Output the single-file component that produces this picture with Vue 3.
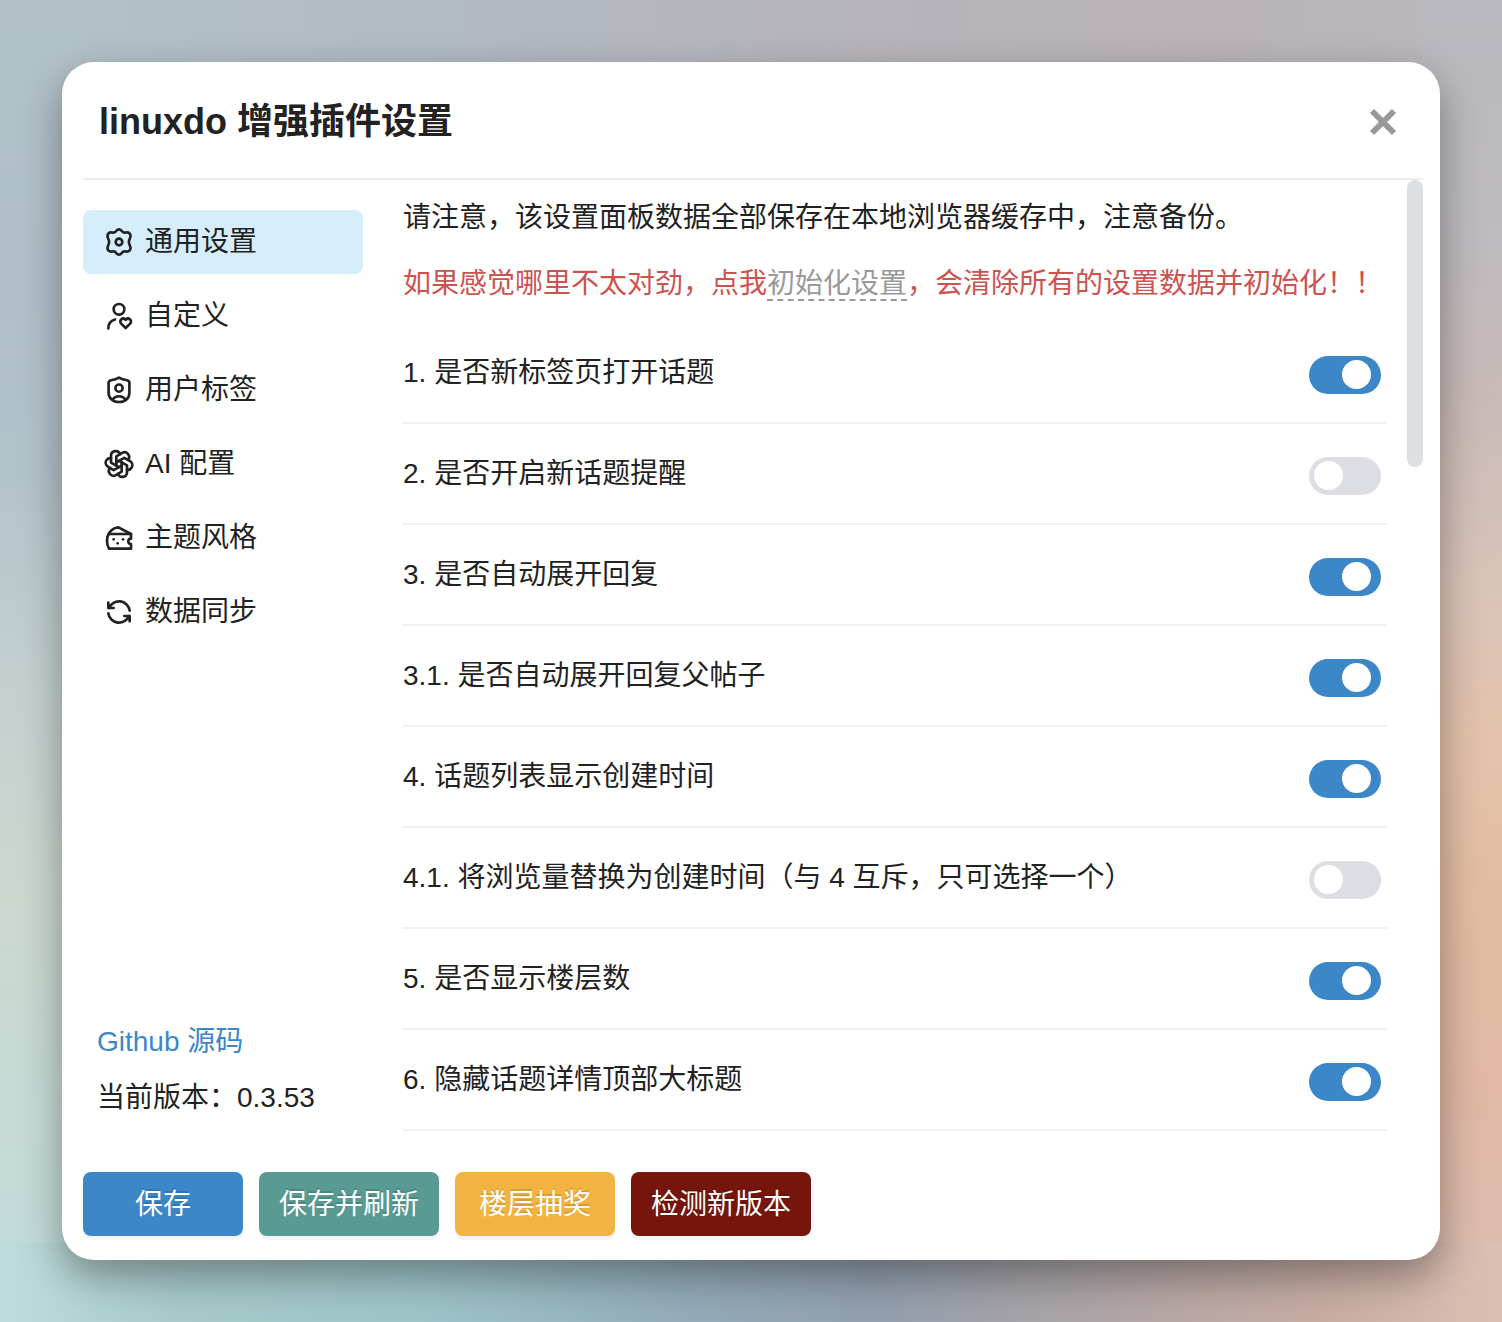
<script setup>
import { ref, reactive } from 'vue'

const tabs = [
  {
    label: '通用设置',
    paths: [
      'M10.1 3.6C11.2 2.1 12.8 2.1 13.9 3.6C14.7 4.8 15.8 5.2 17.1 4.9C19.6 4.5 21 6 20.5 8.2C20.2 9.6 19.4 10.5 19.4 12C19.4 13.5 20.2 14.4 20.5 15.8C21 18 19.6 19.5 17.1 19.1C15.8 18.8 14.7 19.2 13.9 20.4C12.8 21.9 11.2 21.9 10.1 20.4C9.3 19.2 8.2 18.8 6.9 19.1C4.4 19.5 3 18 3.5 15.8C3.8 14.4 4.6 13.5 4.6 12C4.6 10.5 3.8 9.6 3.5 8.2C3 6 4.4 4.5 6.9 4.9C8.2 5.2 9.3 4.8 10.1 3.6z',
      'M9.5 12a2.5 2.5 0 1 0 5 0a2.5 2.5 0 1 0 -5 0',
    ],
  },
  {
    label: '自定义',
    paths: [
      'M8 7a4 4 0 1 0 8 0a4 4 0 0 0 -8 0',
      'M4 21.3c0 -3.3 2 -5.9 5 -6.7',
      'M17 21l3.35 -3.284a2.143 2.143 0 0 0 .005 -3.071a2.242 2.242 0 0 0 -3.129 -.006l-.224 .22l-.223 -.22a2.242 2.242 0 0 0 -3.128 -.006a2.143 2.143 0 0 0 -.006 3.071l3.355 3.296z',
    ],
  },
  {
    label: '用户标签',
    paths: [
      'M12 2.7c-1.8 1.1 -4 1.7 -6 2c-1.2 .3 -1.8 .9 -1.8 2v7.3c0 4.3 3.3 7 7.8 7s7.8 -2.7 7.8 -7v-7.3c0 -1.1 -.6 -1.7 -1.8 -2c-2 -.3 -4.2 -.9 -6 -2z',
      'M9.3 10.6a2.7 2.7 0 1 0 5.4 0a2.7 2.7 0 1 0 -5.4 0',
      'M7.2 19.2c1 -1.7 2.6 -2.5 4.8 -2.5s3.8 .8 4.8 2.5',
    ],
  },
  {
    label: 'AI 配置',
    paths: [
      'M11.217 19.384a3.501 3.501 0 0 0 6.783 -1.217v-5.167l-6 -3.35',
      'M5.214 15.014a3.501 3.501 0 0 0 4.446 5.266l4.34 -2.534v-6.946',
      'M6 7.63c-1.391 -.236 -2.787 .395 -3.534 1.689a3.474 3.474 0 0 0 1.271 4.745l4.263 2.514l6 -3.348',
      'M12.783 4.616a3.501 3.501 0 0 0 -6.783 1.217v5.067l6 3.45',
      'M18.786 8.986a3.501 3.501 0 0 0 -4.446 -5.266l-4.34 2.534v6.946',
      'M18 16.302c1.391 .236 2.787 -.395 3.534 -1.689a3.474 3.474 0 0 0 -1.271 -4.745l-4.308 -2.514l-5.955 3.42',
    ],
  },
  {
    label: '主题风格',
    paths: [
      'M4.519 20.008l16.481 -.008v-3.5a2 2 0 1 1 0 -4v-3.5h-16.722',
      'M21 9l-9.385 -4.992c-2.512 .12 -4.758 1.42 -6.327 3.425c-1.423 1.82 -2.288 4.221 -2.288 6.854c0 2.117 .56 4.085 1.519 5.721',
      'M15 13v.01',
      'M8 13v.01',
      'M11 16v.01',
    ],
  },
  {
    label: '数据同步',
    paths: [
      'M20 11a8.1 8.1 0 0 0 -15.5 -2m-.5 -4v4h4',
      'M4 13a8.1 8.1 0 0 0 15.5 2m.5 4v-4h-4',
    ],
  },
]
const active = ref(0)

const options = reactive([
  { text: '1. 是否新标签页打开话题', on: true },
  { text: '2. 是否开启新话题提醒', on: false },
  { text: '3. 是否自动展开回复', on: true },
  { text: '3.1. 是否自动展开回复父帖子', on: true },
  { text: '4. 话题列表显示创建时间', on: true },
  { text: '4.1. 将浏览量替换为创建时间（与 4 互斥，只可选择一个）', on: false },
  { text: '5. 是否显示楼层数', on: true },
  { text: '6. 隐藏话题详情顶部大标题', on: true },
])
</script>

<template>
  <div class="backdrop">
    <section class="dialog" role="dialog" aria-labelledby="dialog-title">
      <header class="head">
        <h1 id="dialog-title">linuxdo 增强插件设置</h1>
        <button class="close" type="button" aria-label="关闭">
          <svg viewBox="0 0 28 28" width="28" height="28"><path d="M3 3L25 25M25 3L3 25" /></svg>
        </button>
      </header>

      <div class="body">
        <aside class="side">
          <nav>
            <button
              v-for="(tab, i) in tabs"
              :key="tab.label"
              type="button"
              class="tab"
              :class="{ active: i === active }"
              @click="active = i"
            >
              <svg viewBox="0 0 24 24" width="32" height="32" aria-hidden="true">
                <path v-for="d in tab.paths" :key="d" :d="d" />
              </svg>
              <span>{{ tab.label }}</span>
            </button>
          </nav>
          <div class="about">
            <a href="#">Github 源码</a>
            <p>当前版本：0.3.53</p>
          </div>
        </aside>

        <main class="content">
          <p class="note">请注意，该设置面板数据全部保存在本地浏览器缓存中，注意备份。</p>
          <p class="note warn">如果感觉哪里不太对劲，点我<a href="#">初始化设置</a>，会清除所有的设置数据并初始化！！</p>
          <div class="options">
            <label v-for="o in options" :key="o.text" class="option">
              <span>{{ o.text }}</span>
              <input v-model="o.on" type="checkbox" role="switch" />
            </label>
          </div>
        </main>
        <div class="track"><div class="thumb"></div></div>
      </div>

      <footer class="foot">
        <button type="button" class="save">保存</button>
        <button type="button" class="refresh">保存并刷新</button>
        <button type="button" class="draw">楼层抽奖</button>
        <button type="button" class="check">检测新版本</button>
      </footer>
    </section>
  </div>
</template>

<style>
body {
  margin: 0;
}
</style>

<style scoped>
* {
  box-sizing: border-box;
}
h1,
p {
  margin: 0;
}
button {
  padding: 0;
  border: 0;
  background: none;
  color: inherit;
  font: inherit;
  cursor: pointer;
}
a {
  text-decoration: none;
}
.backdrop {
  min-height: 100vh;
  padding: 62px;
  color: #222;
  font: 28px/40px "Liberation Sans", "Noto Sans CJK SC", sans-serif;
  background:
    linear-gradient(90deg, #bedcdb 0%, #a8caca 12%, #9ec4c8 28%, #92abb8 46%, #929fae 58%, #b0a5a6 74%, #c8aca3 88%, #dcc0b4 100%) bottom / 100% 80px no-repeat,
    linear-gradient(180deg, #b9b8be 0%, #bdbbc0 15%, #c8bab8 30%, #d9c3b8 44%, #e3c2ab 56%, #e2bca2 68%, #e0b8a4 82%, #dbbeb2 100%) right / 80px 100% no-repeat,
    linear-gradient(180deg, #b2c2c8 0%, #b0bfc8 22%, #b3c3ca 36%, #c4d0d0 52%, #cbd8ce 68%, #c6dad6 84%, #bedcdb 100%) left / 80px 100% no-repeat,
    linear-gradient(90deg, #b2c2c8 0%, #b2bac2 30%, #b8b3ba 62%, #bab3b9 78%, #bab8be 100%);
}
.dialog {
  display: flex;
  flex-direction: column;
  padding: 0 17px 24px 21px;
  border-radius: 32px;
  background: #fff;
  box-shadow: 0 16px 40px rgba(0, 0, 0, 0.36);
}
.head {
  display: flex;
  align-items: center;
  justify-content: space-between;
  height: 118px;
  padding: 4px 26px 0 16px;
  border-bottom: 2px solid #eee;
}
h1 {
  font-size: 36px;
  line-height: 48px;
}
.close {
  display: flex;
}
.close svg {
  fill: none;
  stroke: #999;
  stroke-width: 6;
}
.body {
  display: flex;
}
.side {
  display: flex;
  flex: none;
  flex-direction: column;
  justify-content: space-between;
  width: 280px;
  padding: 30px 0 14px;
}
nav {
  display: flex;
  flex-direction: column;
  gap: 10px;
}
.tab {
  display: flex;
  align-items: center;
  gap: 10px;
  height: 64px;
  padding: 0 20px;
  border-radius: 8px;
  text-align: left;
}
.tab.active {
  background: #d6eefc;
}
.tab svg {
  fill: none;
  stroke: currentColor;
  stroke-width: 2;
  stroke-linecap: round;
  stroke-linejoin: round;
}
.about {
  display: flex;
  flex-direction: column;
  gap: 16px;
  padding-left: 14px;
}
.about a {
  color: #3b87c8;
}
.content {
  flex: 1;
  min-width: 0;
  padding: 18px 20px 1px 40px;
}
.note + .note {
  margin-top: 26px;
}
.warn {
  color: #cc5350;
}
.warn a {
  border-bottom: 2px dashed #999;
  color: #999;
}
.options {
  margin-top: 19px;
}
.option {
  display: flex;
  align-items: center;
  justify-content: space-between;
  height: 101px;
  padding-right: 6px;
  border-bottom: 2px solid #f0f0f0;
}
.option input {
  appearance: none;
  width: 72px;
  height: 38px;
  margin: 4px 0 0;
  padding: 4px 5px;
  border-radius: 19px;
  background: #dddde4;
}
.option input::before {
  content: "";
  display: block;
  width: 29px;
  height: 29px;
  border-radius: 50%;
  background: #fff;
}
.option input:checked {
  background: #3b87c8;
}
.option input:checked::before {
  margin-left: 28px;
}
.track {
  flex: none;
  width: 16px;
}
.thumb {
  height: 287px;
  border-radius: 8px;
  background: #dedfe1;
}
.foot {
  display: flex;
  gap: 16px;
  padding-top: 40px;
}
.foot button {
  height: 64px;
  min-width: 160px;
  padding: 2px 20px 0;
  border-radius: 8px;
  color: #fff;
  text-shadow: 0 -2px 0 rgba(0, 0, 0, 0.12);
  box-shadow: 0 4px 0 rgba(0, 0, 0, 0.045);
}
.foot .save {
  background: #3b87c8;
}
.foot .refresh {
  background: #599a92;
}
.foot .draw {
  background: #f2b340;
}
.foot .check {
  background: #76150c;
}
</style>
